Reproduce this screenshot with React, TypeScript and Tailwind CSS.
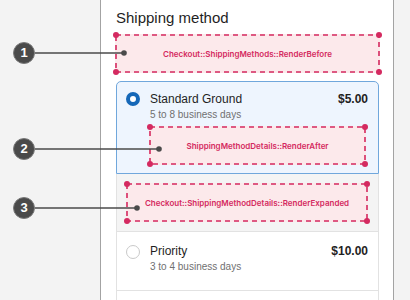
import React from "react";

const font = "font-['Liberation_Sans','Arial',sans-serif]";

interface DashBoxProps {
  w: number;
  h: number;
  label: string;
  className?: string;
}

const DashBox: React.FC<DashBoxProps> = ({ w, h, label, className = "" }) => {
  return (
    <div className={`relative flex items-center justify-center bg-[#fce9eb] ${className}`}>
      <svg className="absolute inset-0 overflow-visible" width={w} height={h}>
        <rect
          x={1}
          y={1}
          width={w - 2}
          height={h - 2}
          fill="none"
          stroke="#d42a60"
          strokeWidth={1.6}
          strokeDasharray="5 4"
        />
        {[
          [1, 1],
          [w - 1, 1],
          [1, h - 1],
          [w - 1, h - 1],
        ].map(([cx, cy], i) => (
          <circle key={i} cx={cx} cy={cy} r={3} fill="#d42a60" />
        ))}
      </svg>
      <span className="relative font-['Inter',sans-serif] text-[8px] font-semibold text-[#d42a60] leading-none">
        {label}
      </span>
    </div>
  );
};

const Badge: React.FC<{ n: number; top: string }> = ({ n, top }) => (
  <div
    className={`absolute left-[13px] ${top} w-[22px] h-[22px] rounded-full bg-[#4a4a4a] border border-[#7a7a7a] flex items-center justify-center text-white text-[13px] font-bold`}
  >
    {n}
  </div>
);

const App: React.FC = () => {
  return (
    <div className={`relative w-[410px] h-[300px] overflow-hidden flex bg-[#f3f3f3] ${font}`}>
      <div className="w-[100px] shrink-0" />
      <div className="w-[294px] shrink-0 bg-white border-x border-[#a3a3a3] pl-[15px] pr-[14px] pt-[8px]">
        <h2 className="text-[15px] leading-[20px] text-[#1f1f1f]">Shipping method</h2>

        <DashBox
          w={265}
          h={39}
          label="Checkout::ShippingMethods::RenderBefore"
          className="w-[265px] h-[39px] -ml-px mt-[6px]"
        />

        <div className="mt-[8px]">
          {/* selected option */}
          <div className="border border-[#70a7dc] bg-[#eef5fe] rounded-t-[5px] pl-[9px] pr-[10px] pt-[9px] pb-[8px] flex">
            <div className="mt-[1px] w-[14px] h-[14px] rounded-full border-[4px] border-[#1668b8] bg-white shrink-0" />
            <div className="ml-[10px] flex-1">
              <div className="flex justify-between text-[12px] leading-[16px] text-[#1f1f1f]">
                <span>Standard Ground</span>
                <span className="font-bold">$5.00</span>
              </div>
              <div className="text-[10px] leading-[14px] text-[#707070] mt-[1px]">5 to 8 business days</div>
              <DashBox
                w={217}
                h={39}
                label="ShippingMethodDetails::RenderAfter"
                className="w-[217px] h-[39px] -ml-px mt-[4px]"
              />
            </div>
          </div>

          {/* expanded content */}
          <div className="bg-[#f4f4f4] border-x border-b border-[#e2e2e2] pl-[9px] pt-[9px] pb-[9px]">
            <DashBox
              w={242}
              h={39}
              label="Checkout::ShippingMethodDetails::RenderExpanded"
              className="w-[242px] h-[39px]"
            />
          </div>

          {/* priority option */}
          <div className="border-x border-b border-[#e2e2e2] pl-[9px] pr-[10px] pt-[11px] h-[59px] flex">
            <div className="mt-[2px] w-[14px] h-[14px] rounded-full border border-[#c9c9c9] bg-white shrink-0" />
            <div className="ml-[10px] flex-1">
              <div className="flex justify-between text-[12px] leading-[16px] text-[#1f1f1f]">
                <span>Priority</span>
                <span className="font-bold">$10.00</span>
              </div>
              <div className="text-[10px] leading-[14px] text-[#707070] mt-[1px]">3 to 4 business days</div>
            </div>
          </div>
          <div className="border-x border-[#e2e2e2] h-[20px]" />
        </div>
      </div>
      <div className="flex-1" />

      {/* annotation leaders */}
      <svg className="absolute inset-0 pointer-events-none" width={410} height={300}>
        <g stroke="#4a4a4a" strokeWidth={1.5}>
          <line x1={35} y1={53} x2={124} y2={53} />
          <line x1={35} y1={149} x2={159} y2={149} />
          <line x1={35} y1={208} x2={137} y2={208} />
        </g>
        <g fill="#4a4a4a">
          <circle cx={124} cy={53} r={2.8} />
          <circle cx={159} cy={149} r={2.8} />
          <circle cx={137} cy={208} r={2.8} />
        </g>
      </svg>
      <Badge n={1} top="top-[42px]" />
      <Badge n={2} top="top-[138px]" />
      <Badge n={3} top="top-[197px]" />
    </div>
  );
};

export default App;
